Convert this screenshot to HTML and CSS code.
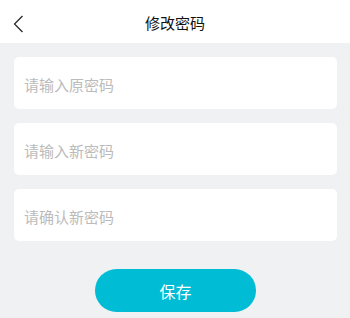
FILE: index.html
```html
<!DOCTYPE html>
<html lang="zh">
<head>
<meta charset="utf-8">
<link rel="stylesheet" href="styles.css">
</head>
<body>
<div class="page">
  <header class="nav">
    <span class="back">
      <svg width="12" height="18" viewBox="0 0 12 18"><path d="M9.5 1 L1.5 9 L9.5 17" fill="none" stroke="#222" stroke-width="1.2"/></svg>
    </span>
    <h1 class="title">修改密码</h1>
  </header>
  <main class="form">
    <div class="field"><input type="password" placeholder="请输入原密码"></div>
    <div class="field"><input type="password" placeholder="请输入新密码"></div>
    <div class="field"><input type="password" placeholder="请确认新密码"></div>
    <div class="actions"><button class="save">保存</button></div>
  </main>
</div>
</body>
</html>
```
FILE: styles.css
```css
html, body { margin: 0; padding: 0; }
body {
  background: #f0f1f3;
  font-family: "Noto Sans CJK SC", "Noto Sans", sans-serif;
  width: 350px;
  height: 318px;
  overflow: hidden;
}
.nav {
  height: 43px;
  background: #fff;
  display: flex;
  align-items: center;
  justify-content: center;
  position: relative;
}
.back {
  position: absolute;
  left: 13px;
  top: 15px;
  display: flex;
}
.title {
  margin: 0;
  font-size: 15px;
  font-weight: 400;
  color: #111;
  line-height: 1;
  margin-top: 2px;
}
.form {
  padding: 14px 13px 0 14px;
  display: flex;
  flex-direction: column;
  gap: 14px;
}
.field {
  height: 52px;
  background: #fff;
  border-radius: 5px;
  display: flex;
  align-items: center;
}
.field input {
  border: none;
  outline: none;
  background: transparent;
  width: 100%;
  padding: 0 10px;
  font-family: inherit;
  font-size: 15px;
  color: #333;
  margin-top: 2px;
}
.field input::placeholder { color: #bbbbbb; }
.actions {
  display: flex;
  justify-content: center;
  margin-top: 14px;
}
.save {
  width: 161px;
  height: 43px;
  border: none;
  border-radius: 22px;
  background: #00bcd4;
  color: #fff;
  font-family: inherit;
  font-size: 16px;
}
```
